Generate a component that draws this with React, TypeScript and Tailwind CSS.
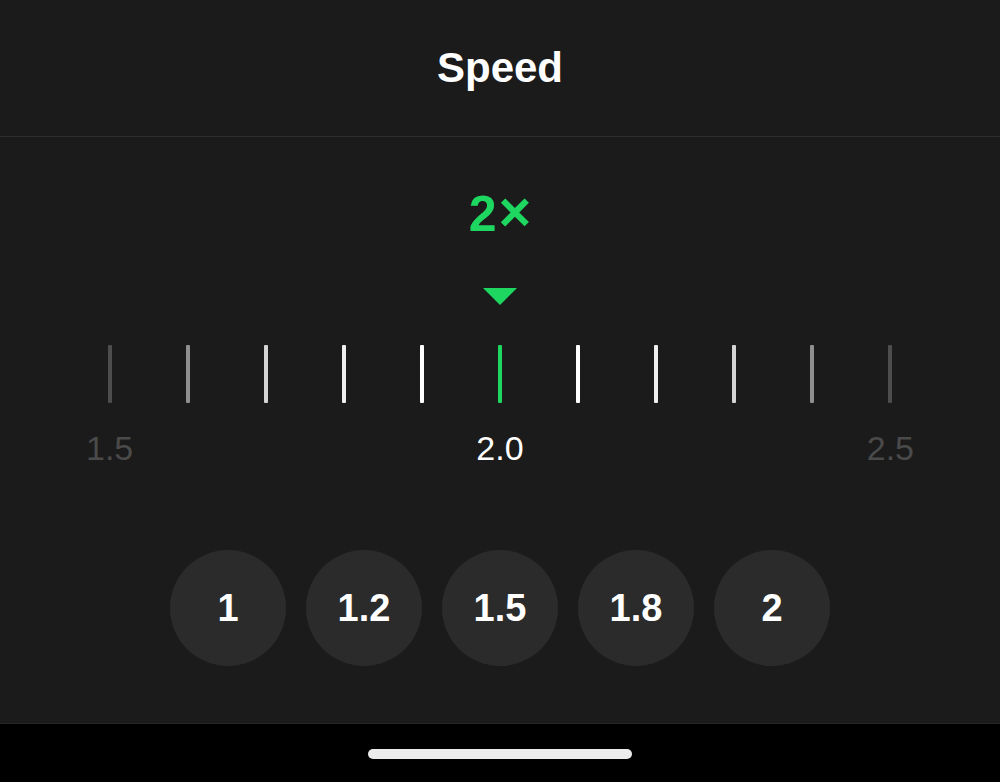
import React from 'react'

const ticks = [
  'bg-[#4d4d4d]',
  'bg-[#8f8f8f]',
  'bg-[#d4d4d4]',
  'bg-[#efefef]',
  'bg-white',
  'bg-[#1ed760]',
  'bg-white',
  'bg-[#efefef]',
  'bg-[#d4d4d4]',
  'bg-[#8f8f8f]',
  'bg-[#4d4d4d]',
]

const presets = ['1', '1.2', '1.5', '1.8', '2']

export default function App() {
  return (
    <div
      className="flex h-[782px] w-full flex-col bg-[#1b1b1b] text-white"
      style={{ fontFamily: '"Liberation Sans", Arial, sans-serif' }}
    >
      <header className="flex h-[137px] shrink-0 items-center justify-center border-b border-[#2e2e2e] pb-px">
        <h1 className="text-[42px] font-bold leading-none">Speed</h1>
      </header>

      <main className="flex flex-1 flex-col items-center">
        <div className="mt-[47px] flex items-baseline text-[50px] font-bold leading-none text-[#1ed760]">
          <span>2</span>
          <span className="ml-[2px] text-[56px]">×</span>
        </div>

        <svg width="34" height="17" viewBox="0 0 34 17" className="mt-[48px]">
          <path d="M0 0h34L17 17z" fill="#1ed760" />
        </svg>

        {/* ruler */}
        <div className="mt-[40px] flex w-[784px] justify-between">
          {ticks.map((c, i) => (
            <div key={i} className={`h-[58px] w-[4px] rounded-[1px] ${c}`} />
          ))}
        </div>

        <div className="mt-[28px] flex w-[828px] justify-between text-[34px] leading-none">
          <span className="text-[#4a4a4a]">1.5</span>
          <span className="text-white">2.0</span>
          <span className="text-[#4a4a4a]">2.5</span>
        </div>

        <div className="mt-[85px] flex gap-[20px]">
          {presets.map(p => (
            <button
              key={p}
              className="flex h-[116px] w-[116px] items-center justify-center rounded-full bg-[#2b2b2b] text-[38px] font-bold leading-none text-white"
            >
              {p}
            </button>
          ))}
        </div>
      </main>

      <div className="flex h-[59px] shrink-0 justify-center border-t border-[#262626] bg-black pt-[25px]">
        <div className="h-[10px] w-[264px] rounded-full bg-[#ececec]" />
      </div>
    </div>
  )
}
